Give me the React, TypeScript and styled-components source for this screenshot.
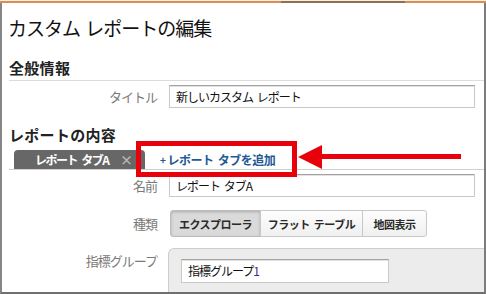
import styled, { createGlobalStyle, css } from "styled-components";

const GlobalStyle = createGlobalStyle`
  html, body {
    margin: 0;
    padding: 0;
    background: #fff;
  }
  body {
    font-family: "Noto Sans CJK JP", "Liberation Sans", sans-serif;
  }
`;

const Page = styled.div`
  position: relative;
  width: 486px;
  height: 294px;
  display: flex;
  flex-direction: column;
  overflow: hidden;
  background: #fff;
`;

const TopStrip = styled.div`
  flex: none;
  height: 3px;
  background: linear-gradient(
        to right,
        #db8d52 0 281px,
        #8d7050 281px 405px,
        #db8d52 405px
      )
      0 1px / 100% 2px no-repeat,
    #f7eee6;
`;

const Frame = styled.div`
  flex: 1;
  min-height: 0;
  display: flex;
  flex-direction: column;
  overflow: hidden;
  border-left: 2px solid #868686;
  border-right: 2px solid #7c7c7c;
  border-bottom: 2px solid #6f6f6f;
`;

const Title = styled.h1`
  margin: 13px 0 0 6px;
  font-size: 19px;
  line-height: 24px;
  font-weight: 400;
  letter-spacing: -1px;
  word-spacing: 2px;
  color: #111;
`;

const SectionHeading = styled.h2<{ $top: number; $ruled?: boolean }>`
  margin: ${(p) => p.$top}px 0 0 7px;
  font-size: 15px;
  line-height: 20px;
  font-weight: 700;
  letter-spacing: 0.3px;
  color: #222;
  ${(p) =>
    p.$ruled &&
    css`
      padding-bottom: 2px;
      border-bottom: 1px solid #dcdcdc;
    `}
`;

const FieldRow = styled.div<{ $top: number; $align?: string }>`
  display: grid;
  grid-template-columns: 155px 1fr;
  column-gap: 12px;
  align-items: ${(p) => p.$align || "center"};
  margin-top: ${(p) => p.$top}px;
`;

const Label = styled.div<{ $top?: number }>`
  text-align: right;
  font-size: 13px;
  line-height: 16px;
  letter-spacing: -1px;
  color: #7a7a7a;
  margin-top: ${(p) => p.$top || 0}px;
`;

const TextBox = styled.div<{ $w: number; $h: number }>`
  box-sizing: border-box;
  width: ${(p) => p.$w}px;
  height: ${(p) => p.$h}px;
  padding: 0 6px;
  border: 1px solid #c9c9c9;
  border-top-color: #a2a2a2;
  box-shadow: inset 0 1px 0 #e2e2e2;
  background: #fff;
  font-size: 12px;
  line-height: ${(p) => p.$h - 2}px;
  letter-spacing: -1px;
  word-spacing: 2px;
  color: #111;
  white-space: pre;
`;

const Digit = styled.span`
  color: #3b2a8c;
`;

const TabBar = styled.div`
  display: flex;
  align-items: stretch;
  height: 22px;
  margin: 5px 0 0 7px;
  border-bottom: 1px solid #cfcfcf;
`;

const Tab = styled.div`
  box-sizing: border-box;
  width: 131px;
  margin-left: 5px;
  padding-left: 21px;
  display: flex;
  align-items: center;
  background: #676767;
  border-radius: 4px 4px 0 0;
  color: #fff;
  font-size: 12px;
  font-weight: 700;
  letter-spacing: -1.5px;
  word-spacing: 3px;
  white-space: pre;
`;

const TabClose = styled.span`
  margin-left: auto;
  margin-right: 12px;
  color: #b8b8b8;
  font-size: 13px;
  letter-spacing: 0;
`;

const AddTab = styled.div`
  margin-left: 15px;
  display: flex;
  align-items: center;
  color: #1e5a96;
  font-size: 12px;
  font-weight: 700;
  letter-spacing: -0.5px;
  word-spacing: 2px;
  white-space: pre;
`;

const Plus = styled.span`
  font-size: 10px;
  margin-right: 2px;
`;

const ButtonGroup = styled.div`
  display: flex;
  margin-left: 1px;
`;

const SegButton = styled.div<{ $w: number; $active?: boolean }>`
  box-sizing: border-box;
  width: ${(p) => p.$w}px;
  height: 27px;
  display: flex;
  align-items: center;
  justify-content: center;
  border: 1px solid #c8c8c8;
  font-size: 11px;
  font-weight: 700;
  letter-spacing: -0.5px;
  word-spacing: 2px;
  color: #2a2a2a;
  white-space: pre;
  background: linear-gradient(#fdfdfd, #f0f0f0);
  & + & {
    margin-left: -1px;
  }
  &:first-child {
    border-radius: 3px 0 0 3px;
  }
  &:last-child {
    border-radius: 0 3px 3px 0;
  }
  ${(p) =>
    p.$active &&
    css`
      background: #dadada;
      box-shadow: inset 0 1px 3px rgba(0, 0, 0, 0.22);
      border-color: #bdbdbd;
    `}
`;

const GroupPanel = styled.div`
  margin-left: -1px;
  padding: 10px 0 10px 12px;
  background: #ececec;
  border-top: 1px solid #cdcdcd;
  border-left: 1px solid #cdcdcd;
  border-top-left-radius: 6px;
`;

const Highlight = styled.div`
  position: absolute;
  left: 136px;
  top: 141px;
  width: 161px;
  height: 36px;
  box-sizing: border-box;
  border: 5px solid #e8000b;
  pointer-events: none;
`;

const Arrow = styled.svg`
  position: absolute;
  left: 297px;
  top: 143px;
  pointer-events: none;
`;

export default function App() {
  return (
    <>
      <GlobalStyle />
      <Page>
        <TopStrip />
        <Frame>
          <Title>カスタム レポートの編集</Title>

          <SectionHeading $top={18} $ruled>
            全般情報
          </SectionHeading>
          <FieldRow $top={4}>
            <Label>タイトル</Label>
            <TextBox $w={306} $h={23}>
              新しいカスタム レポート
            </TextBox>
          </FieldRow>

          <SectionHeading $top={17}>レポートの内容</SectionHeading>
          <TabBar>
            <Tab>
              レポート タブA
              <TabClose>×</TabClose>
            </Tab>
            <AddTab>
              <Plus>+</Plus>レポート タブを追加
            </AddTab>
          </TabBar>

          <FieldRow $top={4}>
            <Label>名前</Label>
            <TextBox $w={306} $h={23}>
              レポート タブA
            </TextBox>
          </FieldRow>

          <FieldRow $top={13}>
            <Label>種類</Label>
            <ButtonGroup>
              <SegButton $w={91} $active>
                エクスプローラ
              </SegButton>
              <SegButton $w={103}>フラット テーブル</SegButton>
              <SegButton $w={65}>地図表示</SegButton>
            </ButtonGroup>
          </FieldRow>

          <FieldRow $top={11} $align="start">
            <Label $top={5}>指標グループ</Label>
            <GroupPanel>
              <TextBox $w={208} $h={24}>
                指標グループ<Digit>1</Digit>
              </TextBox>
            </GroupPanel>
          </FieldRow>
        </Frame>

        <Highlight />
        <Arrow width="166" height="28" viewBox="0 0 166 28">
          <polygon points="1,14 25,2 25,26" fill="#e8000b" />
          <rect x="24" y="11" width="140" height="5" fill="#e8000b" />
        </Arrow>
      </Page>
    </>
  );
}
